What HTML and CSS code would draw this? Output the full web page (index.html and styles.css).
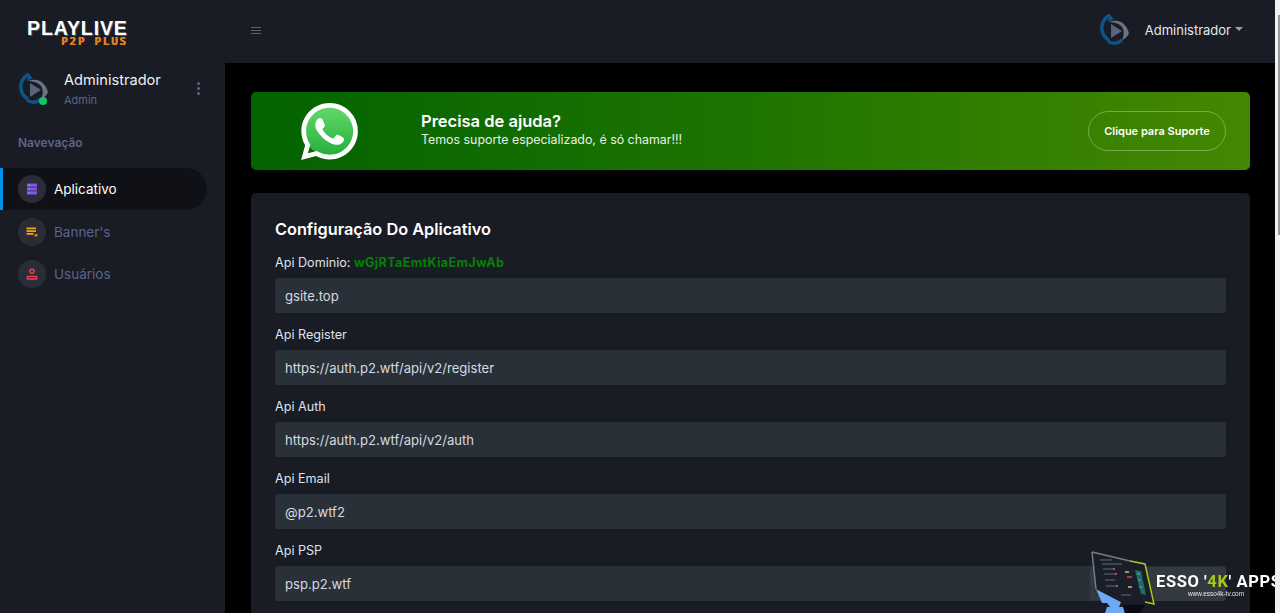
FILE: index.html
```html
<!DOCTYPE html>
<html lang="pt-BR">
<head>
    <meta charset="UTF-8">
    <meta name="viewport" content="width=device-width, initial-scale=1.0">
    <title>PlayLive P2P Plus</title>
    <link rel="stylesheet" href="styles.css">
</head>
<body>
    <svg class="defs" width="0" height="0">
        <symbol id="play-logo" viewBox="0 0 30 32">
            <path d="M10 1C4 4 1 10 2 16c.6 4 3 8 7 10" fill="none" stroke="#0d5587" stroke-width="3.500"/>
            <path d="M9 0l5 5-6 3z" fill="#0d5587"/>
            <path d="M8 27c4 3.500 10 3 14-1" fill="none" stroke="#0d5587" stroke-width="3.500"/>
            <path d="M9 8c7-3 14-1 18 6 1 2 2 5 2 5-1 3-4 6-7 7 2-4 3-10-1-14-3-3-8-4-12-4z" fill="#6b7482"/>
            <path d="M11 10l11 7-11 7z" fill="#56657c"/>
        </symbol>
    </svg>

    <div class="shell">
        <aside class="sidebar">
            <div class="brand">
                <div class="brand-name">PLAYLIVE</div>
                <div class="brand-sub">P2P PLUS</div>
            </div>

            <div class="user">
                <div class="user-avatar">
                    <svg width="30" height="32"><use href="#play-logo"/></svg>
                    <span class="online"></span>
                </div>
                <div class="user-info">
                    <div class="user-name">Administrador</div>
                    <div class="user-role">Admin</div>
                </div>
                <div class="user-more"><i></i><i></i><i></i></div>
            </div>

            <div class="nav-title">Navevação</div>

            <nav class="nav">
                <a class="nav-item active" href="#">
                    <span class="nav-icon">
                        <svg width="12" height="12" viewBox="0 0 12 12">
                            <path d="M1 .5h10v3.300H1zM1 4.400h10v3.200H1zM1 8.200h10v3.300H1z" fill="#7f55ea"/>
                            <path d="M2.500 1.500h1v1h-1zM2.500 5.500h1v1h-1zM2.500 9.500h1v1h-1z" fill="#d3c4f8"/>
                        </svg>
                    </span>
                    Aplicativo
                </a>
                <a class="nav-item" href="#">
                    <span class="nav-icon">
                        <svg width="12" height="12" viewBox="0 0 12 12">
                            <path d="M.5 1.500h9.500v1.700H.5zM.5 4.300h9.500V6H.5zM.5 7.100h7v1.700h-7z" fill="#f8a30c"/>
                            <path d="M8.500 8h3v2.500h-3z" fill="#d9820a"/>
                        </svg>
                    </span>
                    Banner's
                </a>
                <a class="nav-item" href="#">
                    <span class="nav-icon">
                        <svg width="12" height="12" viewBox="0 0 12 12" fill="none" stroke="#f0404f" stroke-width="1.500">
                            <circle cx="6" cy="3.200" r="2"/>
                            <path d="M1.500 11V8.500h9V11z"/>
                        </svg>
                    </span>
                    Usuários
                </a>
            </nav>
        </aside>

        <div class="main">
            <header class="topbar">
                <div class="burger"><i></i><i></i><i></i></div>
                <div class="topbar-user">
                    <svg width="30" height="32"><use href="#play-logo"/></svg>
                    <span class="topbar-name">Administrador</span>
                    <span class="caret"></span>
                </div>
            </header>

            <main class="content">
                <section class="support">
                    <div class="support-icon">
                        <svg width="57" height="57" viewBox="0 0 24 24">
                            <defs>
                                <linearGradient id="wa" x1="0" y1="0" x2="0" y2="1">
                                    <stop offset="0" stop-color="#62d96b"/>
                                    <stop offset="1" stop-color="#26ad3a"/>
                                </linearGradient>
                            </defs>
                            <circle cx="12" cy="12" r="10.500" fill="url(#wa)"/>
                            <path fill="#fff" d="M17.472 14.382c-.297-.149-1.758-.867-2.03-.967-.273-.099-.471-.148-.67.15-.197.297-.767.966-.94 1.164-.173.199-.347.223-.644.075-.297-.15-1.255-.463-2.39-1.475-.883-.788-1.48-1.761-1.653-2.059-.173-.297-.018-.458.13-.606.134-.133.298-.347.446-.52.149-.174.198-.298.298-.497.099-.198.05-.371-.025-.52-.075-.149-.669-1.612-.916-2.207-.242-.579-.487-.5-.669-.51-.173-.008-.371-.01-.57-.01-.198 0-.52.074-.792.372-.272.297-1.04 1.016-1.04 2.479 0 1.462 1.065 2.875 1.213 3.074.149.198 2.096 3.2 5.077 4.487.709.306 1.262.489 1.694.625.712.227 1.36.195 1.871.118.571-.085 1.758-.719 2.006-1.413.248-.694.248-1.289.173-1.413-.074-.124-.272-.198-.57-.347m-5.421 7.403h-.004a9.87 9.87 0 01-5.031-1.378l-.361-.214-3.741.982.998-3.648-.235-.374a9.86 9.86 0 01-1.51-5.26c.001-5.45 4.436-9.884 9.888-9.884 2.64 0 5.122 1.03 6.988 2.898a9.825 9.825 0 012.893 6.994c-.003 5.45-4.437 9.884-9.885 9.884m8.413-18.297A11.815 11.815 0 0012.05 0C5.495 0 .16 5.335.157 11.892c0 2.096.547 4.142 1.588 5.945L.057 24l6.305-1.654a11.882 11.882 0 005.683 1.448h.005c6.554 0 11.89-5.335 11.893-11.893a11.821 11.821 0 00-3.48-8.413z"/>
                        </svg>
                    </div>
                    <div class="support-text">
                        <h2>Precisa de ajuda?</h2>
                        <p>Temos suporte especializado, é só chamar!!!</p>
                    </div>
                    <a class="support-btn" href="#">Clique para Suporte</a>
                </section>

                <section class="card">
                    <h3>Configuração Do Aplicativo</h3>
                    <div class="field">
                        <label>Api Dominio: <b class="token">wGjRTaEmtKiaEmJwAb</b></label>
                        <input type="text" value="gsite.top">
                    </div>
                    <div class="field">
                        <label>Api Register</label>
                        <input type="text" value="https://auth.p2.wtf/api/v2/register">
                    </div>
                    <div class="field">
                        <label>Api Auth</label>
                        <input type="text" value="https://auth.p2.wtf/api/v2/auth">
                    </div>
                    <div class="field">
                        <label>Api Email</label>
                        <input type="text" value="@p2.wtf2">
                    </div>
                    <div class="field">
                        <label>Api PSP</label>
                        <input type="text" value="psp.p2.wtf">
                    </div>
                </section>
            </main>
        </div>

        <div class="scrollbar"><div class="scroll-thumb"></div></div>
    </div>

    <!-- watermark over the page -->
    <div class="watermark">
        <div class="wm-strip"></div>
        <svg class="wm-monitor" width="80" height="68" viewBox="0 0 80 68">
            <path d="M11 44l25 13-2 5h4l2 6H20l2-6h3l-3-4h-5z" fill="#6fa8f5"/>
            <path d="M38 60h22l-5 8H40z" fill="#0a0b10"/>
            <path d="M7 7l53 11 10 41-34-2-25-13z" fill="#1a1e28"/>
            <path d="M7 7l38 9M7 7l4 37" stroke="#767c86" stroke-width="1.500" fill="none"/>
            <path d="M45 16l15 3 9 40-9-2" fill="none" stroke="#a9c81a" stroke-width="1.500"/>
            <path d="M50 25l6 1 5 24-5-1z" fill="#1f6a66"/>
            <path d="M52 29h3M53 35h3M54 42h3" stroke="#58b8a8"/>
            <path d="M15 15h12M17 19h20M18 24h10M19 29h11M20 35h10M21 41h10M36 50h10" stroke="#646b78"/>
            <path d="M28 24h2M30 29h2M31 41h2" stroke="#e0559a" stroke-width="1.500"/>
            <path d="M40 27h4M43 42h4" stroke="#d8c05a" stroke-width="1.500"/>
            <path d="M42 32h5" stroke="#d0404a" stroke-width="1.500"/>
        </svg>
        <div class="wm-text">
            <div class="wm-title">ESSO '<span>4K</span>' APPS</div>
            <div class="wm-url">www.esso4k-tv.com</div>
        </div>
    </div>
</body>
</html>
```

FILE: styles.css
```css
* {
    box-sizing: border-box;
}
body {
    margin: 0;
    height: 100vh;
    overflow: hidden;
    background: #000;
    font-family: Inter, "Noto Sans", sans-serif;
    color: #fff;
}
a {
    text-decoration: none;
}
.defs {
    position: absolute;
}
.shell {
    display: flex;
    height: 100%;
}

/* sidebar */
.sidebar {
    width: 225px;
    flex: none;
    background: #191c24;
}
.brand {
    height: 63px;
    padding: 20px 0 0 27px;
}
.brand-name {
    font: bold 19.5px/16px "Liberation Sans", sans-serif;
    letter-spacing: .9px;
    color: #fff;
    text-shadow: 1px 1px 0 #555;
}
.brand-sub {
    font: bold 11px/9px "DejaVu Sans Mono", monospace;
    letter-spacing: 1.7px;
    color: #e8801f;
    text-shadow: .5px 0 0 #e8801f;
    margin-left: 34px;
    margin-top: 1px;
}
.user {
    display: flex;
    align-items: center;
    padding: 7px 0 0 19px;
}
.user-avatar {
    position: relative;
    width: 30px;
    height: 32px;
}
.online {
    position: absolute;
    left: 20px;
    top: 24px;
    width: 8px;
    height: 8px;
    border-radius: 50%;
    background: #10c469;
}
.user-info {
    margin-left: 15px;
    flex: 1;
}
.user-name {
    font-size: 14.6px;
    line-height: 20px;
    color: #eef0f4;
}
.user-role {
    font-size: 11px;
    line-height: 14px;
    margin-top: 3px;
    color: #5c6488;
}
.user-more {
    display: flex;
    flex-direction: column;
    gap: 2px;
    margin-right: 25px;
}
.user-more i {
    width: 3px;
    height: 3px;
    border-radius: 50%;
    background: #5f6484;
}
.nav-title {
    margin: 28px 0 0 18px;
    font-size: 12px;
    font-weight: 600;
    line-height: 16px;
    color: #5c6488;
}
.nav {
    margin-top: 17px;
    display: flex;
    flex-direction: column;
    gap: .5px;
}
.nav-item {
    display: flex;
    align-items: center;
    gap: 8px;
    width: 207px;
    height: 42px;
    padding-left: 18px;
    font-size: 13.5px;
    color: #5c6488;
    border-radius: 0 21px 21px 0;
}
.nav-item.active {
    background: #101116;
    border-left: 3px solid #0091ea;
    padding-left: 15px;
    color: #fff;
}
.nav-icon {
    width: 28px;
    height: 28px;
    border-radius: 50%;
    background: #2a2d38;
    display: flex;
    align-items: center;
    justify-content: center;
}

/* top bar */
.main {
    flex: 1;
    min-width: 0;
}
.topbar {
    height: 63px;
    background: #191c24;
    display: flex;
    align-items: center;
    justify-content: space-between;
    padding: 0 32px 3px 26px;
}
.burger {
    display: flex;
    flex-direction: column;
    gap: 2px;
}
.burger i {
    width: 10px;
    height: 1px;
    background: #5d6272;
}
.topbar-user {
    display: flex;
    align-items: center;
}
.topbar-name {
    margin-left: 15px;
    font-size: 13px;
    color: #e4e7ec;
}
.caret {
    margin-left: 4px;
    margin-top: -2px;
    border-style: solid;
    border-width: 4px 4px 0;
    border-color: #9a9ea8 transparent transparent;
}

/* content */
.content {
    padding: 29px 25px 0 26px;
}
.support {
    display: flex;
    align-items: center;
    height: 78px;
    padding: 0 24px 0 50px;
    border-radius: 5px;
    background: linear-gradient(90deg, #036300, #1b7200 45%, #458800);
}
.support-icon {
    width: 57px;
    height: 57px;
}
.support-text {
    margin-left: 63px;
    padding-bottom: 4px;
    flex: 1;
}
.support-text h2 {
    margin: 0;
    font-size: 16.500px;
    font-weight: 600;
    line-height: 22px;
}
.support-text p {
    margin: 0;
    font-size: 12.400px;
    line-height: 16px;
    color: #e8f2e4;
}
.support-btn {
    width: 138px;
    height: 40px;
    border: 1px solid rgba(255,255,255,.3);
    border-radius: 20px;
    display: flex;
    align-items: center;
    justify-content: center;
    font-size: 11px;
    font-weight: 600;
    color: #fff;
}
.card {
    margin-top: 23px;
    padding: 26px 24px 24px;
    border-radius: 5px;
    background: #191c24;
}
.card h3 {
    margin: 0 0 13px;
    font-size: 16.300px;
    font-weight: 600;
    line-height: 20px;
}
.field {
    margin-bottom: 11px;
}
.field label {
    display: block;
    font-size: 12.600px;
    line-height: 21px;
    margin-bottom: 5px;
    color: #dfe3ea;
}
.token {
    letter-spacing: .35px;
    color: #087f08;
}
.field input {
    display: block;
    width: 100%;
    height: 35px;
    padding: 0 10px;
    border: 0;
    border-radius: 2px;
    background: #2a3038;
    font: 13.100px Inter, "Noto Sans", sans-serif;
    color: #d4dae2;
}

/* browser scrollbar in the shot */
.scrollbar {
    width: 5px;
    flex: none;
    background: #f1f1f1;
    padding: 15px 0 0 3px;
}
.scroll-thumb {
    width: 2px;
    height: 220px;
    background: #999;
}

/* watermark */
.watermark {
    position: fixed;
    left: 1085px;
    top: 545px;
    width: 190px;
    height: 68px;
    overflow: hidden;
}
.wm-strip {
    position: absolute;
    left: 5px;
    top: 22px;
    width: 136px;
    height: 34px;
    border-radius: 4px;
    background: rgba(60,70,75,.45);
}
.wm-monitor {
    position: absolute;
    left: 0;
    top: 0;
}
.wm-text {
    position: absolute;
    left: 71px;
    top: 27px;
    white-space: nowrap;
}
.wm-title {
    font: bold 16.500px/20px Roboto, sans-serif;
    letter-spacing: .6px;
    color: #fff;
}
.wm-title span {
    color: #a9c81a;
}
.wm-url {
    font: 6.400px/8px "Liberation Sans", sans-serif;
    margin: -2px 0 0 32px;
    color: #e8e8e8;
}
```
